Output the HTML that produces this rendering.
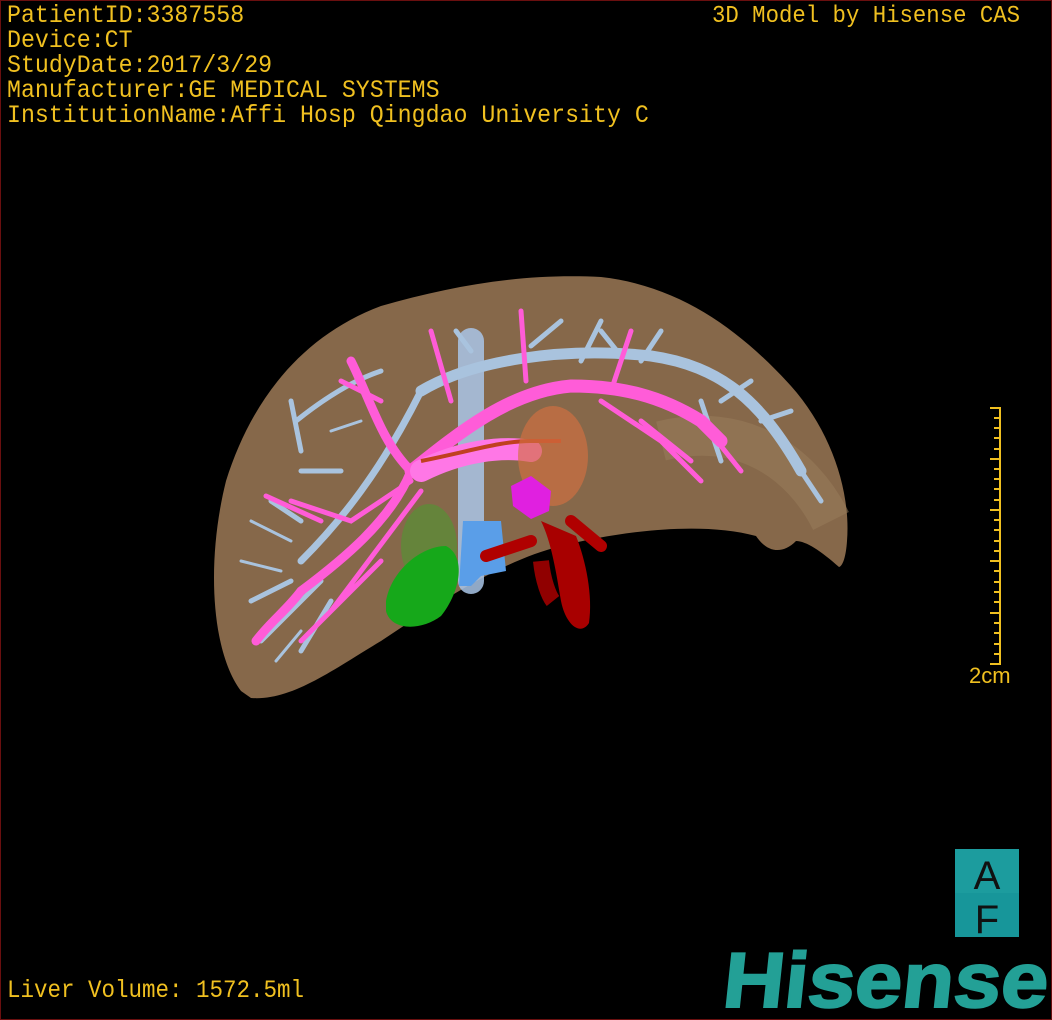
<!DOCTYPE html>
<html><head><meta charset="utf-8"><style>
html,body{margin:0;padding:0;background:#000;}
#c{position:relative;width:1050px;height:1018px;border:1px solid #6a0f0f;overflow:hidden;background:#000;}
.t{position:absolute;font-family:"Liberation Mono",monospace;color:#f0c020;white-space:pre;line-height:25px;transform-origin:0 0;}
</style></head><body><div id="c">
<div class="t" style="left:6px;top:2px;font-size:25px;transform:scaleX(0.93);">PatientID:3387558
Device:CT
StudyDate:2017/3/29
Manufacturer:GE MEDICAL SYSTEMS
InstitutionName:Affi Hosp Qingdao University C</div>
<div class="t" style="left:711px;top:3px;font-size:24px;transform:scaleX(0.93);">3D Model by Hisense CAS</div>
<div class="t" style="left:6px;top:977px;font-size:25px;transform:scaleX(0.9);">Liver Volume: 1572.5ml</div>
<div class="t" style="left:968px;top:662px;font-size:22px;font-family:'Liberation Sans',sans-serif;">2cm</div>
<svg width="1050" height="1018" style="position:absolute;left:0;top:0">
<path d="M240 690 C210 650 205 560 225 480 C250 400 300 335 380 305 C450 285 520 272 600 276 C680 285 740 330 790 385 C830 430 850 490 846 540 C845 555 842 565 838 566 C820 550 805 540 795 540 C780 555 765 550 755 535 C700 520 620 530 560 545 C500 560 440 600 380 640 C330 670 290 700 250 697 Z" fill="#86684a"/>
<path d="M660 440 C740 420 800 460 830 520" stroke="#9a7e5c" stroke-width="40" fill="none" opacity="0.5"/>
<g fill="none" stroke-linecap="round" stroke="#a9c3de">
<path d="M470 340 L470 580" stroke="#a9c6e8" stroke-width="26" opacity="0.85"/>
<path d="M420 390 C470 360 560 345 650 355 C720 365 760 400 800 470" stroke-width="11"/>
<path d="M300 560 C340 520 380 470 420 390" stroke-width="7"/>
<path d="M380 370 C350 380 320 400 295 420 M455 330 L470 350 M530 345 L560 320 M580 360 L600 320 M640 360 L660 330 M720 400 L750 380 M760 420 L790 410 M300 520 L270 500 M280 620 L320 580 M300 650 L330 600 M250 600 L290 580 M290 400 L300 450 M260 640 L300 600 M600 330 L620 355 M700 400 L720 460 M800 470 L820 500 M340 470 L300 470" stroke-width="5"/>
<path d="M240 560 L280 570 M250 520 L290 540 M275 660 L300 630 M330 430 L360 420" stroke-width="3"/>
</g>
<g fill="none" stroke-linecap="round" stroke="#ff5cd8">
<path d="M410 470 C460 430 510 390 570 385 C620 385 660 395 700 420 L720 440" stroke-width="13"/>
<path d="M350 360 C370 400 380 440 410 470 C390 520 340 560 300 590 C285 610 270 620 255 640" stroke-width="9"/>
<path d="M520 310 L525 380 M430 330 L450 400 M630 330 L610 390 M640 420 L690 460 M600 400 L660 440 L700 480 M410 480 L350 520 L290 500 M420 490 L330 610 M265 495 L320 520 M380 560 L300 640 M340 380 L380 400 M700 420 L740 470" stroke-width="5"/>
<path d="M420 470 C460 450 500 445 530 450" stroke="#ff77e6" stroke-width="22"/>
</g>
<path d="M420 460 C470 450 500 440 530 440 L560 440" stroke="#c04020" stroke-width="4" fill="none"/>
<ellipse cx="552" cy="455" rx="35" ry="50" fill="#d27040" opacity="0.65"/>
<path d="M462 520 L500 520 L505 570 L480 575 L470 585 L458 585 Z" fill="#5a9ee8"/>
<ellipse cx="428" cy="545" rx="28" ry="42" fill="#4a9a30" opacity="0.55"/>
<path d="M385 600 C390 570 420 545 445 545 C465 555 460 590 440 615 C420 630 390 630 385 610 Z" fill="#16a81a"/>
<path d="M540 520 C550 540 555 570 560 600 C565 625 580 635 588 622 C592 595 585 560 575 535 Z" fill="#a80000"/>
<path d="M485 555 L530 540 M570 520 L600 545" stroke="#b00000" stroke-width="12" fill="none" stroke-linecap="round"/>
<path d="M540 560 C542 580 548 595 552 600" stroke="#900000" stroke-width="16" fill="none"/>
<path d="M510 485 L530 475 L550 490 L548 510 L530 518 L512 505 Z" fill="#e020e0"/>
<g stroke="#f0c020" stroke-width="2">
<line x1="999" y1="406" x2="999" y2="664"/>
<line x1="989" y1="407" x2="999" y2="407"/>
<line x1="993" y1="417" x2="999" y2="417"/><line x1="993" y1="427" x2="999" y2="427"/><line x1="993" y1="437" x2="999" y2="437"/><line x1="993" y1="448" x2="999" y2="448"/>
<line x1="989" y1="458" x2="999" y2="458"/>
<line x1="993" y1="468" x2="999" y2="468"/><line x1="993" y1="478" x2="999" y2="478"/><line x1="993" y1="488" x2="999" y2="488"/><line x1="993" y1="499" x2="999" y2="499"/>
<line x1="989" y1="509" x2="999" y2="509"/>
<line x1="993" y1="519" x2="999" y2="519"/><line x1="993" y1="529" x2="999" y2="529"/><line x1="993" y1="540" x2="999" y2="540"/><line x1="993" y1="550" x2="999" y2="550"/>
<line x1="989" y1="560" x2="999" y2="560"/>
<line x1="993" y1="570" x2="999" y2="570"/><line x1="993" y1="581" x2="999" y2="581"/><line x1="993" y1="591" x2="999" y2="591"/><line x1="993" y1="601" x2="999" y2="601"/>
<line x1="989" y1="612" x2="999" y2="612"/>
<line x1="993" y1="622" x2="999" y2="622"/><line x1="993" y1="632" x2="999" y2="632"/><line x1="993" y1="643" x2="999" y2="643"/><line x1="993" y1="653" x2="999" y2="653"/>
<line x1="989" y1="663" x2="999" y2="663"/>
</g>
<rect x="954" y="848" width="64" height="44" fill="#1c9c9e"/>
<rect x="954" y="892" width="64" height="44" fill="#17969a"/>
<text x="986" y="888" font-family="Liberation Sans,sans-serif" font-size="40" text-anchor="middle" fill="#111">A</text>
<text x="986" y="932" font-family="Liberation Sans,sans-serif" font-size="40" text-anchor="middle" fill="#111">F</text>
<text x="0" y="0" transform="translate(720 1006) skewX(-6)" font-family="Liberation Sans,sans-serif" font-weight="bold" font-size="78" fill="#23a096" stroke="#23a096" stroke-width="2" textLength="325" lengthAdjust="spacingAndGlyphs">Hisense</text>
</svg>
</div></body></html>
